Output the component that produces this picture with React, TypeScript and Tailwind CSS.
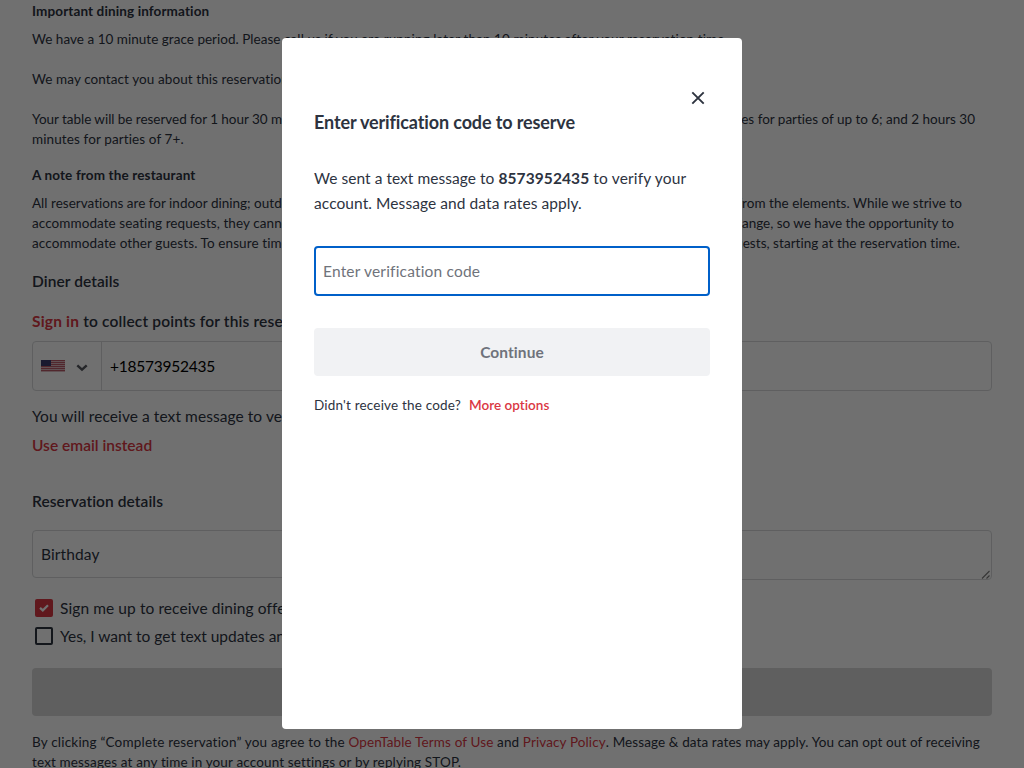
import type { ReactNode } from "react";

function Line({ className = "", children }: { className?: string; children: ReactNode }) {
  return <div className={`flex h-5 items-center whitespace-pre ${className}`}>{children}</div>;
}

function Flag() {
  return (
    <svg width="24" height="12" viewBox="0 0 24 12" className="block">
      <rect width="24" height="12" fill="#dcb9bf" />
      {[0, 2, 4, 6, 8, 10].map((y) => (
        <rect key={y} y={y} width="24" height="1" fill="#b85a68" />
      ))}
      <rect width="10" height="6" fill="#3c3b6e" />
    </svg>
  );
}

function Check() {
  return (
    <svg width="18" height="18" viewBox="0 0 18 18" className="block">
      <path d="M5 8.9 7.8 11.4 13 6.3" fill="none" stroke="#fff" strokeWidth="2.2" />
    </svg>
  );
}

function ReservationPage() {
  return (
    <div className="flex h-[772px] flex-col bg-white px-8 pt-[1px] text-[13.5px] text-[#2d333f]">
      <Line className="shrink-0 font-bold tracking-[0.124px]">Important dining information</Line>
      <Line className="mt-2 shrink-0">
        <span className="tracking-[0.023px]">We have a 10 minute grace period. Please</span>
        <span className="tracking-[0.09px]">
          {" "}
          call us if you are running later than 10 minutes after your reservation time.
        </span>
      </Line>
      <Line className="mt-5 shrink-0 tracking-[0.086px]">We may contact you about this reservation</Line>
      <Line className="mt-5 shrink-0 justify-between pr-[17px]">
        <span className="tracking-[-0.041px]">Your table will be reserved for 1 hour 30 minutes</span>
        <span className="tracking-[-0.011px]">minutes for parties of up to 6; and 2 hours 30</span>
      </Line>
      <Line className="shrink-0 tracking-[0.111px]">minutes for parties of 7+.</Line>
      <Line className="mt-4 shrink-0 font-bold tracking-[0.14px]">A note from the restaurant</Line>
      <Line className="mt-2 shrink-0 justify-between pr-[30px]">
        <span className="tracking-[0.012px]">All reservations are for indoor dining; outdoor</span>
        <span className="tracking-[0.055px]">from the elements. While we strive to</span>
      </Line>
      <Line className="shrink-0 justify-between pr-[38px]">
        <span className="tracking-[0.076px]">accommodate seating requests, they cannot</span>
        <span className="tracking-[-0.025px]">change, so we have the opportunity to</span>
      </Line>
      <Line className="shrink-0 justify-between pr-8">
        <span className="tracking-[0.099px]">accommodate other guests. To ensure timely</span>
        <span className="tracking-[0.039px]">guests, starting at the reservation time.</span>
      </Line>

      <h2 className="mt-4 h-6 shrink-0 text-[15.5px] leading-6 font-semibold tracking-[0.08px]">Diner details</h2>
      <p className="mt-4 h-6 shrink-0 text-[15.5px] leading-6 whitespace-pre">
        <span className="font-bold tracking-[0.2px] text-[#da3743]">Sign in</span>
        <span className="font-semibold tracking-[0.17px]"> to collect points for this reservation</span>
      </p>
      <div className="mt-2 flex h-[50px] shrink-0 rounded border border-[#d8d9db] text-[15.5px]">
        <div className="flex w-[69px] items-center gap-[11px] border-r border-[#d8d9db] pl-2">
          <Flag />
          <svg width="12" height="8" viewBox="0 0 12 8" className="mt-[3px] block">
            <path d="m1.3 1.3 4.7 4.4 4.7-4.4" fill="none" stroke="#55585f" strokeWidth="2.4" />
          </svg>
        </div>
        <span className="pl-2 leading-[48px] tracking-[-0.241px] text-black">+18573952435</span>
      </div>
      <p className="mt-[13px] h-6 shrink-0 text-[15.5px] leading-6 tracking-[0.071px]">
        You will receive a text message to verify
      </p>
      <a className="mt-[5px] h-6 shrink-0 text-[15.5px] leading-6 font-semibold tracking-[0.01px] text-[#da3743]">
        Use email instead
      </a>
      <h2 className="mt-8 h-6 shrink-0 text-[15.5px] leading-6 font-semibold tracking-[0.08px]">
        Reservation details
      </h2>
      <div className="mt-[17px] flex h-[50px] shrink-0 items-start gap-4">
        <div className="h-12 w-[472px] rounded border border-[#d8d9db] pl-2 text-[15.5px] leading-[46px] tracking-[0.109px]">
          Birthday
        </div>
        <div className="flex h-[50px] w-[472px] items-end justify-end rounded border border-[#d8d9db] pr-px">
          <svg width="9" height="9" viewBox="0 0 9 9" className="block">
            <path d="M1 8.5 8.5 1M5.5 8.5l3-3" stroke="#7b7b7b" strokeWidth="1.1" />
          </svg>
        </div>
      </div>
      <div className="mt-[15px] flex h-7 shrink-0 items-center pl-[3px] text-[15.5px] tracking-[0.087px]">
        <span className="mb-[3px] size-[18px] rounded-[2px] bg-[#da3743]">
          <Check />
        </span>
        <span className="ml-[7px]">Sign me up to receive dining offers</span>
      </div>
      <div className="flex h-7 shrink-0 items-center pl-[3px] text-[15.5px] tracking-[-0.008px]">
        <span className="mb-[3px] size-[18px] rounded-[2px] border-2 border-[#2d333f]" />
        <span className="ml-[7px]">Yes, I want to get text updates and</span>
      </div>
      <div className="mt-[16.5px] h-12 shrink-0 rounded bg-[#d8d8d8]" />
      <Line className="mt-[16.5px] shrink-0">
        <span className="tracking-[0.195px]">By clicking “Complete reservation” you agree to the </span>
        <span className="tracking-[0.132px] text-[#da3743]">OpenTable Terms of Use</span>
        <span className="tracking-[0.132px]"> and </span>
        <span className="tracking-[0.112px] text-[#da3743]">Privacy Policy</span>
        <span className="tracking-[0.104px]">. Message &amp; data rates may apply. You can opt out of receiving</span>
      </Line>
      <Line className="shrink-0 tracking-[0.141px]">
        text messages at any time in your account settings or by replying STOP.
      </Line>
    </div>
  );
}

function VerificationDialog() {
  return (
    <div
      role="dialog"
      className="flex h-[690.5px] w-[460px] flex-col rounded bg-white px-8 pt-[51.5px] text-[15.5px] text-[#2d333f]"
    >
      <button className="mr-1 flex h-4 w-4 shrink-0 items-center justify-center self-end" aria-label="Close">
        <svg width="14" height="14" viewBox="0 0 14 14" className="block">
          <path d="m1.3 1.3 11.4 11.4m0-11.4L1.3 12.7" stroke="#2d333f" strokeWidth="1.9" />
        </svg>
      </button>
      <h1 className="mt-[4px] h-6 shrink-0 text-[18px] leading-6 font-bold tracking-[-0.126px]">
        Enter verification code to reserve
      </h1>
      <p className="mt-[32px] leading-[25px] whitespace-pre">
        <span className="tracking-[0.045px]">We sent a text message to </span>
        <b className="tracking-[0.09px]">8573952435</b>
        <span className="tracking-[0.164px]"> to verify your</span>
        <br />
        <span className="tracking-[0.08px]">account. Message and data rates apply.</span>
      </p>
      <div className="mt-[30.5px] flex h-[50px] shrink-0 items-center rounded border-2 border-[#0060c9] pl-[7px] tracking-[0.185px] text-[#6f737b]">
        Enter verification code
      </div>
      <button className="mt-8 h-12 shrink-0 rounded bg-[#f1f2f4] pt-px font-bold tracking-[0.078px] text-[#6f737b]">
        Continue
      </button>
      <div className="mt-[18.5px] flex h-5 gap-2 text-[13.5px] leading-5">
        <span className="tracking-[0.185px]">Didn't receive the code?</span>
        <a className="font-semibold tracking-[0.02px] text-[#da3743]">More options</a>
      </div>
    </div>
  );
}

export default function App() {
  return (
    <main className="relative h-[768px] w-full overflow-hidden font-['Lato',sans-serif]">
      <ReservationPage />
      <div className="absolute inset-0 flex items-start justify-center bg-black/56 pt-[38.4px]">
        <VerificationDialog />
      </div>
    </main>
  );
}
